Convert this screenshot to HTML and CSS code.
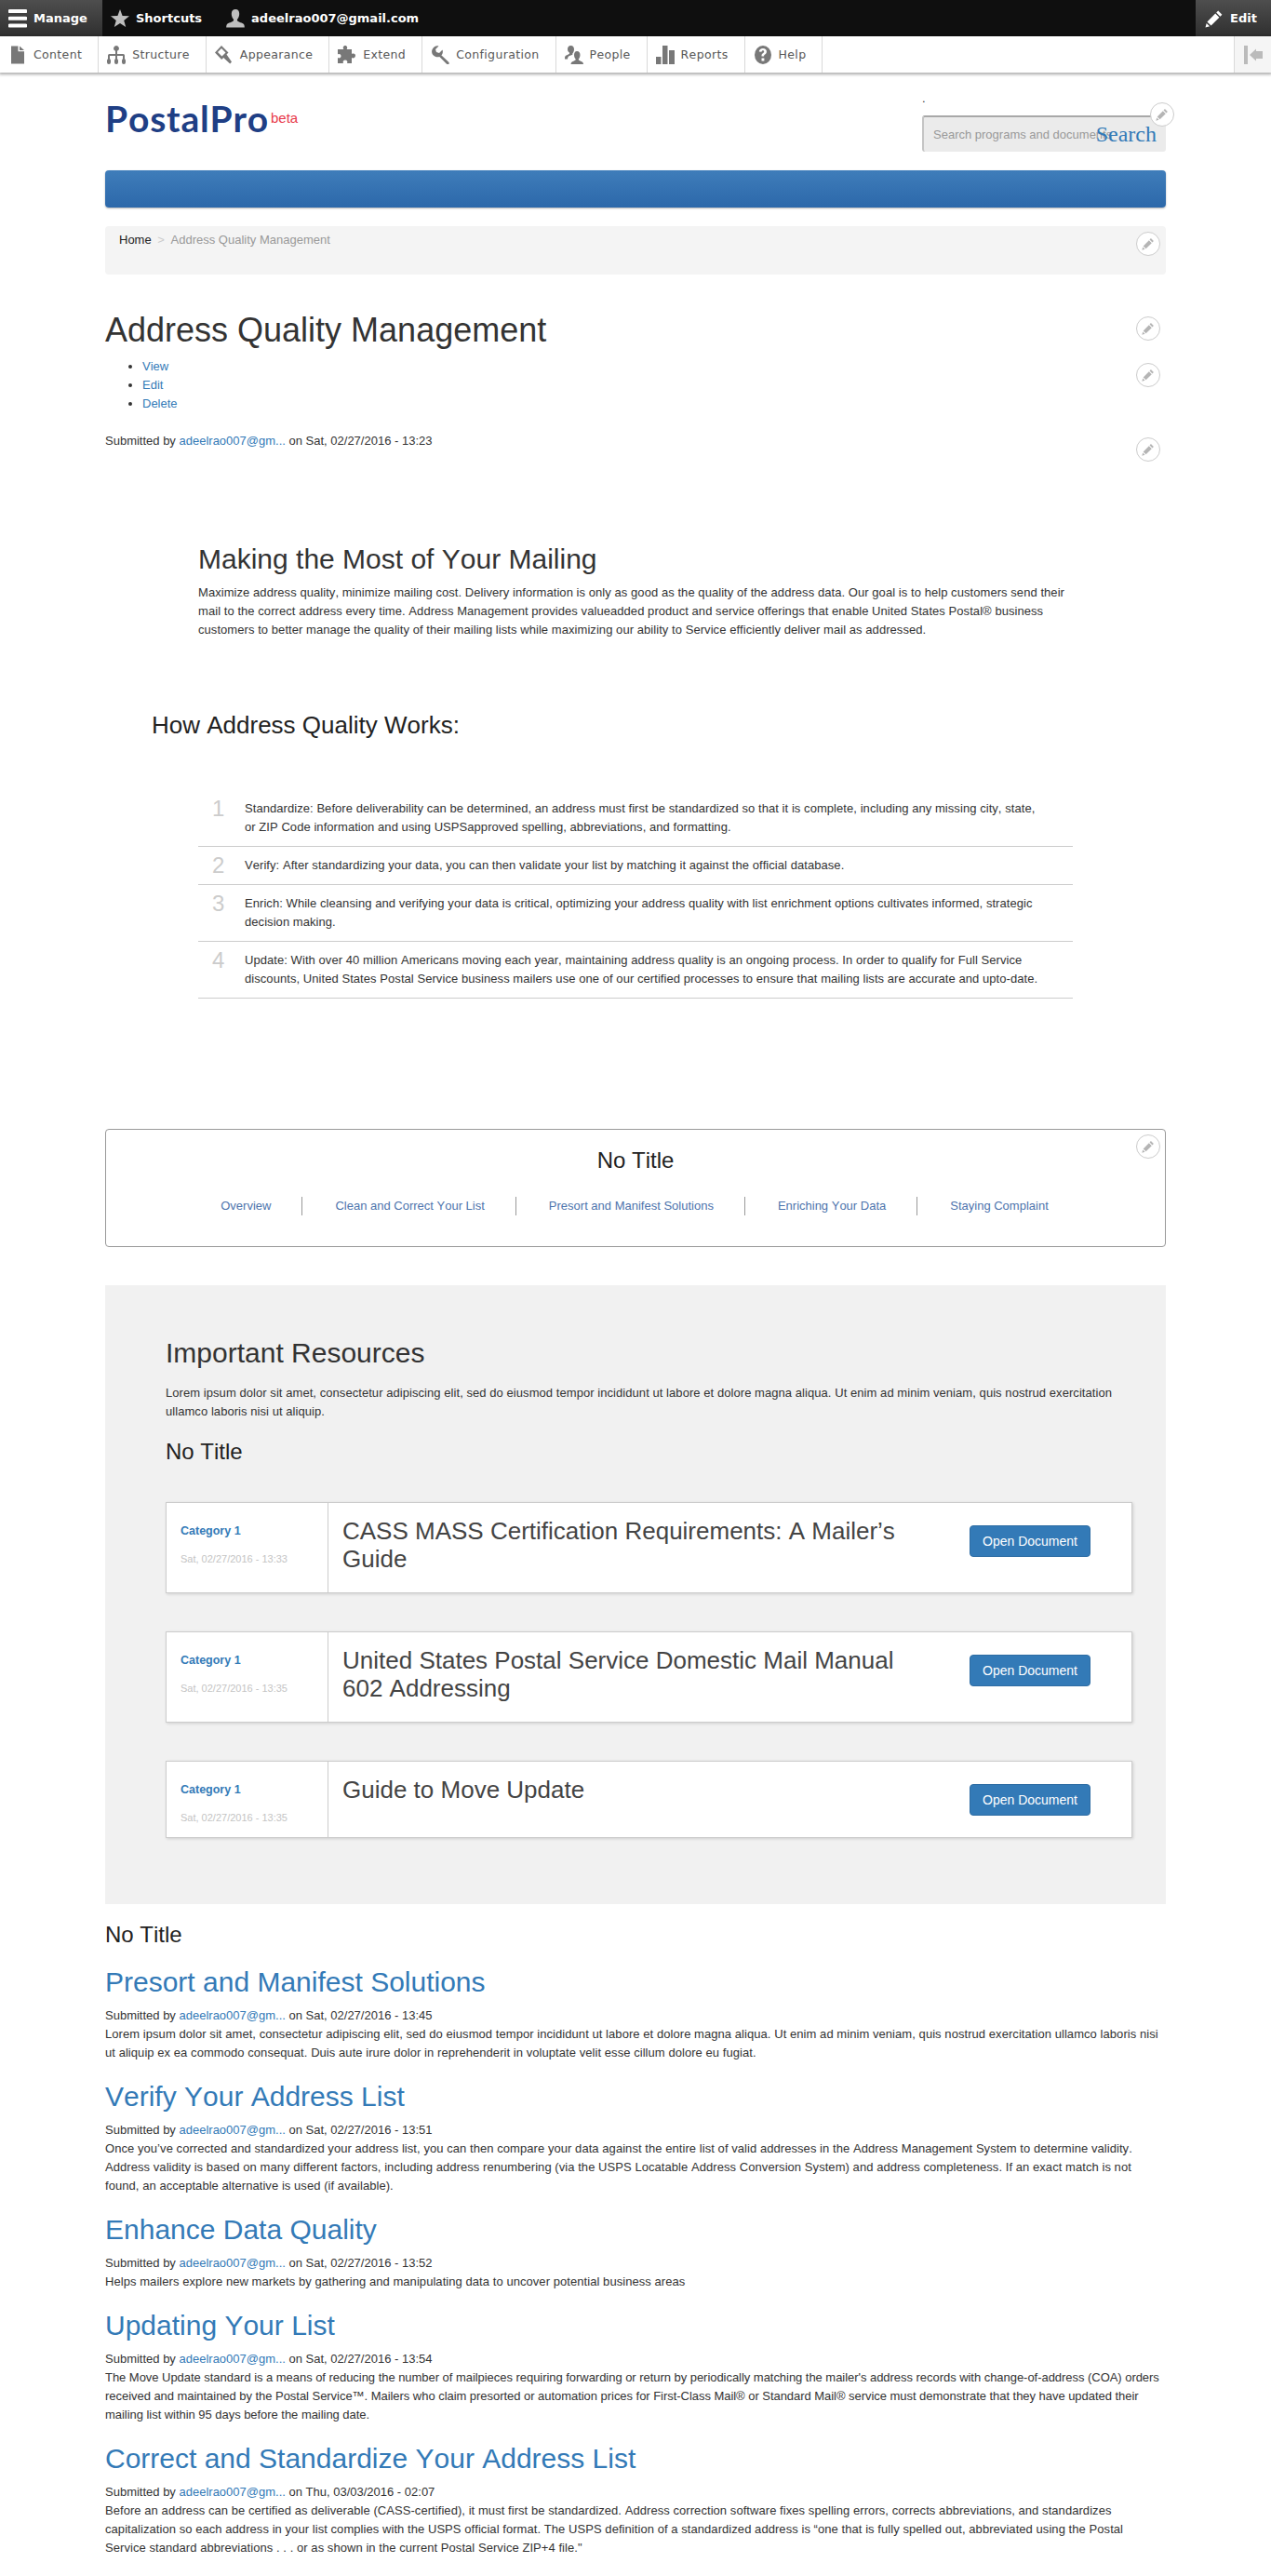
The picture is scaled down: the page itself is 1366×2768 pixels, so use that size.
FILE: index.html
```html
<!DOCTYPE html>
<html lang="en">
<head>
    <meta charset="UTF-8">
    <title>Address Quality Management | PostalPro</title>
    <link rel="stylesheet" href="styles.css">
</head>
<body>
    <svg class="sprite" width="0" height="0">
        <defs>
            <symbol id="pencil" viewBox="0 0 20 20">
                <path d="M14.2 1.6l4.2 4.2-2 2-4.2-4.2zM11.2 4.6l4.2 4.2-8.8 8.8-4.2-4.2zM1.7 14.9l3.4 3.4-4.6 1.2z"/>
            </symbol>
        </defs>
    </svg>

    <div class="bar">
        <a class="bar-tab bar-tab-on" href="#">
            <svg class="bar-icon" viewBox="0 0 20 20"><path class="ic-white" d="M1.5 0h17a1.5 1.5 0 0 1 0 4h-17a1.5 1.5 0 0 1 0-4zM1.5 7.7h17a1.7 1.7 0 0 1 0 4h-17a1.7 1.7 0 0 1 0-4zM1.5 15.5h17a1.7 1.7 0 0 1 0 4h-17a1.7 1.7 0 0 1 0-4z"/></svg>
            Manage
        </a>
        <a class="bar-tab" href="#">
            <svg class="bar-icon" viewBox="0 0 20 20"><path class="ic-light" d="M10 0l2.6 6.9 7.4.4-5.8 4.6 2 7.1L10 15l-6.200 4 2-7.100L0 7.300l7.400-.4z"/></svg>
            Shortcuts
        </a>
        <a class="bar-tab" href="#">
            <svg class="bar-icon" viewBox="0 0 20 20"><path class="ic-light" d="M10 0c2.600 0 4.200 2 4.200 4.800 0 2.300-.8 4.400-2 5.800-.4.500-.4 1.300 0 1.900.8.900 5.800 2.300 6.800 3.500.6.800.8 2.200.8 3.600H.2c0-1.400.2-2.800.8-3.600 1-1.200 6-2.600 6.800-3.500.4-.6.400-1.400 0-1.900-1.200-1.400-2-3.500-2-5.800C5.800 2 7.400 0 10 0z"/></svg>
            adeelrao007@gmail.com
        </a>
        <a class="bar-tab bar-tab-edit" href="#">
            <svg class="bar-icon" viewBox="0 0 20 20"><use href="#pencil" class="ic-white"/></svg>
            Edit
        </a>
    </div>

    <div class="tray">
        <a class="tray-item" href="#">
            <svg class="tray-icon" viewBox="0 0 20 20"><path d="M3 .5h7.500v5.700h6.500V19.500H3zM12 .5l5 4.500h-5z"/></svg>
            Content
        </a>
        <a class="tray-item" href="#">
            <svg class="tray-icon" viewBox="0 0 20 20"><path d="M10 0a3 3 0 0 1 1 5.800V9h6.500a1.500 1.500 0 0 1 1.500 1.500v3.800a2.500 2.500 0 0 1 1 2.200v1.500A2 2 0 0 1 16 18v-1.500a2.500 2.500 0 0 1 1-2.200V11h-6v3.300a2.500 2.500 0 0 1 1 2.200v1.500a2 2 0 0 1-4 0v-1.500a2.500 2.500 0 0 1 1-2.200V11H3v3.300a2.500 2.500 0 0 1 1 2.200v1.500a2 2 0 0 1-4 0v-1.500a2.500 2.500 0 0 1 1-2.200v-3.800A1.500 1.500 0 0 1 2.500 9H9V5.800A3 3 0 0 1 10 0z"/></svg>
            Structure
        </a>
        <a class="tray-item" href="#">
            <svg class="tray-icon" viewBox="0 0 20 20"><path d="M7 0l7.500 7.500-2 2 5.500 8-1.800 2-7-6.500-2 2L0 7.500zM7 3L3 7l4.500 4.500 4-4z"/></svg>
            Appearance
        </a>
        <a class="tray-item" href="#">
            <svg class="tray-icon" viewBox="0 0 20 20"><path d="M0 4h6.500C5 2.500 6 0 8 0s3 2.500 1.500 4H15v5c1.500-1 4-.5 4 1.800S16.500 14 15 13v6H10c1-1.500 0-3.500-2-3.500S5 17.500 6 19H0v-6c1.500 1 3.500.3 3.500-1.700S1.500 8.500 0 9.500z"/></svg>
            Extend
        </a>
        <a class="tray-item" href="#">
            <svg class="tray-icon" viewBox="0 0 20 20"><path d="M8.500.5L5 4l1 3 3 1 3.500-3.500c.8 2.300.3 4.400-1.200 5.800l7.700 7.300c1 1 .9 1.700.2 2.300-.8.500-1.600.4-2.400-.4L9.300 12c-2.300.8-4.700.3-6.400-1.400C1 8.800.6 6.300 1.600 4 3 1 6-.3 8.500.5z"/></svg>
            Configuration
        </a>
        <a class="tray-item" href="#">
            <svg class="tray-icon" viewBox="0 0 20 20"><path d="M6.500 0C9 0 10 2 10 4c0 1.800-.7 3.400-1.500 4.300-.3.400-.3 1-.1 1.400-1.700.7-3.900 1.300-4.700 2.300-.4.500-.6 1.300-.7 2.500H0c0-1.500.1-2.700.6-3.300.8-1 3.700-1.800 4.300-2.500.2-.4.200-1 0-1.300C4 7.400 3 5.800 3 4 3 2 4 0 6.500 0zM13 6c2.500 0 3.500 2 3.500 4 0 1.800-.7 3.400-1.500 4.300-.3.400-.3 1 0 1.300.6.700 3.500 1.500 4.300 2.400.4.400.6 1 .7 2H6.500c.1-1 .3-1.600.7-2 .8-.9 3.700-1.700 4.300-2.400.3-.3.300-.9 0-1.300-.8-.9-1.500-2.500-1.500-4.300 0-2 1-4 3-4z"/></svg>
            People
        </a>
        <a class="tray-item" href="#">
            <svg class="tray-icon" viewBox="0 0 20 20"><path d="M0 12h5.500v8H0zM7 0h5.500v20H7zM14 5h6v15h-6z"/></svg>
            Reports
        </a>
        <a class="tray-item" href="#">
            <svg class="tray-icon" viewBox="0 0 20 20"><path fill-rule="evenodd" d="M10 0a9 10 0 1 1 0 20 9 10 0 0 1 0-20zM10 3C7.500 3 6 4.300 5.800 6.500l2.700.3c.1-1 .6-1.500 1.400-1.500s1.300.4 1.300 1.100c0 .6-.3 1-1.100 1.600-1.200.9-1.600 1.700-1.600 3v.6h2.600v-.4c0-.8.200-1.100 1-1.700 1.200-.9 1.800-1.800 1.800-3.100C14 4.300 12.400 3 10 3zM8.500 13.500v3h2.900v-3z"/></svg>
            Help
        </a>
        <a class="tray-toggle" href="#">
            <svg class="toggle-icon" viewBox="0 0 20 20"><path d="M0 0h4v20H0zM13 6V3.500L6 10l7 6.500V14h7V6z"/></svg>
        </a>
    </div>

    <div class="page">
        <header class="site-head">
            <div class="logo">
                <a class="logo-name" href="#">PostalPro</a>
                <span class="logo-beta">beta</span>
            </div>
            <div class="search-col">
                <div class="search-dot">.</div>
                <form class="search-box">
                    <input class="search-input" type="text" placeholder="Search programs and documents">
                    <a class="search-go" href="#">Search</a>
                    <a class="ctx ctx-search" href="#"><svg viewBox="0 0 20 20"><use href="#pencil"/></svg></a>
                </form>
            </div>
        </header>

        <nav class="main-nav"></nav>

        <div class="crumbs">
            <a class="crumb-home" href="#">Home</a>
            <span class="crumb-sep">&gt;</span>
            <span class="crumb-now">Address Quality Management</span>
            <a class="ctx ctx-crumbs" href="#"><svg viewBox="0 0 20 20"><use href="#pencil"/></svg></a>
        </div>

        <div class="edit-row">
            <h1>Address Quality Management</h1>
            <a class="ctx ctx-title" href="#"><svg viewBox="0 0 20 20"><use href="#pencil"/></svg></a>
        </div>
        <div class="edit-row">
            <ul class="tabs">
                <li><a href="#">View</a></li>
                <li><a href="#">Edit</a></li>
                <li><a href="#">Delete</a></li>
            </ul>
            <a class="ctx ctx-tabs" href="#"><svg viewBox="0 0 20 20"><use href="#pencil"/></svg></a>
        </div>
        <div class="edit-row">
            <div class="meta">Submitted by <a href="#">adeelrao007@gm...</a> on Sat, 02/27/2016 - 13:23</div>
            <a class="ctx ctx-meta" href="#"><svg viewBox="0 0 20 20"><use href="#pencil"/></svg></a>
        </div>

        <section class="intro">
            <h2>Making the Most of Your Mailing</h2>
            <p>Maximize address quality, minimize mailing cost. Delivery information is only as good as the quality of the address data. Our goal is to help customers send their mail to the correct address every time. Address Management provides valueadded product and service offerings that enable United States Postal® business customers to better manage the quality of their mailing lists while maximizing our ability to Service efficiently deliver mail as addressed.</p>
        </section>

        <h3 class="how-title">How Address Quality Works:</h3>

        <ol class="steps">
            <li class="step"><span class="step-num">1</span><p>Standardize: Before deliverability can be determined, an address must first be standardized so that it is complete, including any missing city, state, or ZIP Code information and using USPSapproved spelling, abbreviations, and formatting.</p></li>
            <li class="step"><span class="step-num">2</span><p>Verify: After standardizing your data, you can then validate your list by matching it against the official database.</p></li>
            <li class="step"><span class="step-num">3</span><p>Enrich: While cleansing and verifying your data is critical, optimizing your address quality with list enrichment options cultivates informed, strategic decision making.</p></li>
            <li class="step"><span class="step-num">4</span><p>Update: With over 40 million Americans moving each year, maintaining address quality is an ongoing process. In order to qualify for Full Service discounts, United States Postal Service business mailers use one of our certified processes to ensure that mailing lists are accurate and upto-date.</p></li>
        </ol>

        <div class="jump-box">
            <h3>No Title</h3>
            <ul class="jump-links">
                <li><a href="#">Overview</a></li>
                <li><a href="#">Clean and Correct Your List</a></li>
                <li><a href="#">Presort and Manifest Solutions</a></li>
                <li><a href="#">Enriching Your Data</a></li>
                <li><a href="#">Staying Complaint</a></li>
            </ul>
            <a class="ctx ctx-box" href="#"><svg viewBox="0 0 20 20"><use href="#pencil"/></svg></a>
        </div>

        <section class="resources">
            <h2>Important Resources</h2>
            <p>Lorem ipsum dolor sit amet, consectetur adipiscing elit, sed do eiusmod tempor incididunt ut labore et dolore magna aliqua. Ut enim ad minim veniam, quis nostrud exercitation ullamco laboris nisi ut aliquip.</p>
            <h3>No Title</h3>

            <div class="doc-card">
                <div class="doc-info">
                    <a class="doc-cat" href="#">Category 1</a>
                    <div class="doc-date">Sat, 02/27/2016 - 13:33</div>
                </div>
                <div class="doc-title">CASS MASS Certification Requirements: A Mailer’s Guide</div>
                <a class="btn" href="#">Open Document</a>
            </div>
            <div class="doc-card">
                <div class="doc-info">
                    <a class="doc-cat" href="#">Category 1</a>
                    <div class="doc-date">Sat, 02/27/2016 - 13:35</div>
                </div>
                <div class="doc-title">United States Postal Service Domestic Mail Manual 602 Addressing</div>
                <a class="btn" href="#">Open Document</a>
            </div>
            <div class="doc-card">
                <div class="doc-info">
                    <a class="doc-cat" href="#">Category 1</a>
                    <div class="doc-date">Sat, 02/27/2016 - 13:35</div>
                </div>
                <div class="doc-title">Guide to Move Update</div>
                <a class="btn" href="#">Open Document</a>
            </div>
        </section>

        <h3>No Title</h3>

        <article>
            <h2><a href="#">Presort and Manifest Solutions</a></h2>
            <div class="meta">Submitted by <a href="#">adeelrao007@gm...</a> on Sat, 02/27/2016 - 13:45</div>
            <p>Lorem ipsum dolor sit amet, consectetur adipiscing elit, sed do eiusmod tempor incididunt ut labore et dolore magna aliqua. Ut enim ad minim veniam, quis nostrud exercitation ullamco laboris nisi ut aliquip ex ea commodo consequat. Duis aute irure dolor in reprehenderit in voluptate velit esse cillum dolore eu fugiat.</p>
        </article>
        <article>
            <h2><a href="#">Verify Your Address List</a></h2>
            <div class="meta">Submitted by <a href="#">adeelrao007@gm...</a> on Sat, 02/27/2016 - 13:51</div>
            <p>Once you’ve corrected and standardized your address list, you can then compare your data against the entire list of valid addresses in the Address Management System to determine validity. Address validity is based on many different factors, including address renumbering (via the USPS Locatable Address Conversion System) and address completeness. If an exact match is not found, an acceptable alternative is used (if available).</p>
        </article>
        <article>
            <h2><a href="#">Enhance Data Quality</a></h2>
            <div class="meta">Submitted by <a href="#">adeelrao007@gm...</a> on Sat, 02/27/2016 - 13:52</div>
            <p>Helps mailers explore new markets by gathering and manipulating data to uncover potential business areas</p>
        </article>
        <article>
            <h2><a href="#">Updating Your List</a></h2>
            <div class="meta">Submitted by <a href="#">adeelrao007@gm...</a> on Sat, 02/27/2016 - 13:54</div>
            <p class="tight">The Move Update standard is a means of reducing the number of mailpieces requiring forwarding or return by periodically matching the mailer's address records with change-of-address (COA) orders<br>received and maintained by the Postal Service™. Mailers who claim presorted or automation prices for First-Class Mail® or Standard Mail® service must demonstrate that they have updated their<br>mailing list within 95 days before the mailing date.</p>
        </article>
        <article>
            <h2><a href="#">Correct and Standardize Your Address List</a></h2>
            <div class="meta">Submitted by <a href="#">adeelrao007@gm...</a> on Thu, 03/03/2016 - 02:07</div>
            <p>Before an address can be certified as deliverable (CASS-certified), it must first be standardized. Address correction software fixes spelling errors, corrects abbreviations, and standardizes capitalization so each address in your list complies with the USPS official format. The USPS definition of a standardized address is “one that is fully spelled out, abbreviated using the Postal Service standard abbreviations . . . or as shown in the current Postal Service ZIP+4 file."</p>
        </article>
    </div>
</body>
</html>
```

FILE: styles.css
```css
* {
    box-sizing: border-box;
}

body {
    margin: 0;
    font-family: "Liberation Sans", Arial, sans-serif;
    font-size: 13px;
    line-height: 20px;
    font-kerning: none;
    color: #333;
    background: #fff;
}

a {
    color: #337ab7;
    text-decoration: none;
}

p {
    margin: 0;
    letter-spacing: 0.06px;
}

p.tight {
    letter-spacing: -0.04px;
    white-space: nowrap;
}

h1, h2, h3 {
    margin: 20px 0 10px;
    font-weight: 400;
    line-height: 1.1;
}

h1 {
    font-size: 36px;
}

h2 {
    font-size: 30px;
}

h3 {
    font-size: 24px;
    color: #222;
}

.sprite {
    position: absolute;
}

/* black admin bar */
.bar {
    display: flex;
    height: 39px;
    background: #0f0f0f;
    font-family: "DejaVu Sans", Verdana, sans-serif;
    font-size: 13px;
    font-weight: 700;
}

.bar-tab {
    display: flex;
    align-items: center;
    height: 39px;
    padding: 0 17px 0 9px;
    color: #fff;
}

.bar-tab-on {
    width: 110px;
    background: linear-gradient(#4e4e4e, #2f2f2f);
}

.bar-tab-edit {
    width: 81px;
    margin-left: auto;
    padding-left: 10px;
    background: linear-gradient(#4e4e4e, #2f2f2f);
}

.bar-icon {
    width: 20px;
    height: 20px;
    margin-right: 7px;
    flex: none;
}

.ic-white {
    fill: #fff;
}

.ic-light {
    fill: #bebebe;
}

/* white tray under it */
.tray {
    display: flex;
    height: 39px;
    background: #fff;
    box-shadow: 0 1px 3px 1px rgba(0, 0, 0, 0.33);
    font-family: "DejaVu Sans", Verdana, sans-serif;
    font-size: 12.5px;
    letter-spacing: 0.35px;
    position: relative;
}

.tray-item {
    display: flex;
    align-items: center;
    padding: 0 17px 0 9px;
    border-right: 1px solid #d9d9d9;
    color: #565656;
}

.tray-icon {
    width: 20px;
    height: 20px;
    margin-right: 7px;
    fill: #787878;
    flex: none;
}

.tray-toggle {
    display: flex;
    align-items: center;
    justify-content: center;
    width: 40px;
    margin-left: auto;
    background: #f5f5f5;
    border-left: 1px solid #d9d9d9;
}

.toggle-icon {
    width: 20px;
    height: 20px;
    fill: #bbb;
}

.page {
    width: 1140px;
    margin: 0 auto;
}

/* logo and search */
.site-head {
    display: flex;
    justify-content: space-between;
    height: 105px;
}

.logo {
    display: flex;
    align-items: flex-start;
    padding-top: 27px;
}

.logo-name {
    font-family: Lato, "Open Sans", sans-serif;
    font-size: 39px;
    font-weight: 700;
    line-height: 44px;
    letter-spacing: 0.8px;
    color: #1f3f85;
}

.logo-beta {
    margin: 12px 0 0 2px;
    font-size: 15px;
    color: #e8394a;
}

.search-col {
    width: 262px;
    padding-top: 16px;
}

.search-dot {
    height: 30px;
    line-height: 24px;
}

.search-box {
    position: relative;
    height: 39px;
}

.search-input {
    width: 100%;
    height: 39px;
    padding: 0 10px;
    background: #ebebeb;
    border: 0;
    border-top: 2px solid #a8a8a8;
    border-left: 2px solid #c4c4c4;
    border-radius: 3px;
    font-family: "Liberation Sans", Arial, sans-serif;
    font-size: 13px;
}

.search-input::placeholder {
    color: #999;
}

.search-go {
    position: absolute;
    top: 5px;
    right: 10px;
    font-family: "Liberation Serif", "Times New Roman", serif;
    font-size: 24px;
    line-height: 30px;
}

/* blue nav */
.main-nav {
    height: 40px;
    background: linear-gradient(#3f7dba, #2c68aa);
    border-radius: 4px;
    box-shadow: 0 1px 2px rgba(0, 0, 0, 0.3);
}

.crumbs {
    position: relative;
    height: 52px;
    margin-top: 20px;
    padding: 5px 15px;
    background: #f4f4f4;
    border-radius: 4px;
}

.crumb-home {
    color: #222;
}

.crumb-sep {
    margin: 0 3px;
    color: #ccc;
}

.crumb-now {
    color: #999;
}

/* pencil buttons */
.ctx {
    position: absolute;
    right: 6px;
    display: flex;
    align-items: center;
    justify-content: center;
    width: 26px;
    height: 26px;
    background: #fff;
    border: 1px solid #ccc;
    border-radius: 50%;
}

.ctx svg {
    width: 14px;
    height: 14px;
    fill: #b5b5b5;
}

.ctx-search {
    top: -14px;
    right: -9px;
}

.ctx-crumbs {
    top: 6px;
}

.ctx-title {
    top: 5px;
}

.ctx-tabs {
    top: 6px;
}

.ctx-meta {
    top: 6px;
}

.ctx-box {
    top: 5px;
    right: 5px;
}

.edit-row {
    position: relative;
}

.edit-row h1 {
    margin: 40px 0 9px;
}

.tabs {
    margin: 0 0 20px;
    padding: 0 0 0 40px;
}

/* intro */
.intro {
    margin: 100px 100px 0;
}

.how-title {
    margin: 78px 50px 56px;
    font-size: 26px;
}

.steps {
    margin: 0 100px;
    padding: 0;
    list-style: none;
}

.step {
    display: flex;
    padding: 10px 30px 10px 0;
    border-bottom: 1px solid #ccc;
}

.step-num {
    width: 50px;
    padding-left: 15px;
    flex: none;
    font-size: 24px;
    color: #ccc;
}

/* in-page links */
.jump-box {
    position: relative;
    height: 127px;
    margin-top: 140px;
    border: 1px solid #999;
    border-radius: 4px;
    text-align: center;
}

.jump-links {
    display: flex;
    justify-content: center;
    margin: 25px 0 0;
    padding: 0 4px 0 0;
    list-style: none;
}

.jump-links li {
    padding: 0 33px 0 35px;
    border-right: 1px solid #999;
}

.jump-links li:last-child {
    border-right: 0;
}

.jump-links a {
    color: #4d74ad;
}

/* resources */
.resources {
    height: 665px;
    margin-top: 41px;
    padding: 36px 36px 0 65px;
    background: #f1f1f1;
}

.resources h2 {
    margin-bottom: 17px;
}

.resources h3 {
    margin-bottom: 40px;
}

.doc-card {
    display: flex;
    align-items: flex-start;
    margin-bottom: 41px;
    background: #fff;
    border: 1px solid #ccc;
    box-shadow: 1px 1px 3px rgba(0, 0, 0, 0.15);
}

.doc-info {
    align-self: stretch;
    width: 174px;
    min-height: 81px;
    padding: 20px 0 11px 15px;
    flex: none;
    border-right: 1px solid #ccc;
}

.doc-cat {
    font-size: 12.5px;
    font-weight: 700;
}

.doc-date {
    margin-top: 10px;
    font-size: 11px;
    color: #c4c4c4;
}

.doc-title {
    flex: 1;
    padding: 15px 40px 21px 15px;
    font-size: 26px;
    line-height: 30px;
    color: #444;
}

.btn {
    width: 130px;
    height: 34px;
    margin: 24px 44px 0 0;
    flex: none;
    background: #337ab7;
    border: 1px solid #2e6da4;
    border-radius: 4px;
    font-size: 14px;
    line-height: 32px;
    text-align: center;
    color: #fff;
}
```
